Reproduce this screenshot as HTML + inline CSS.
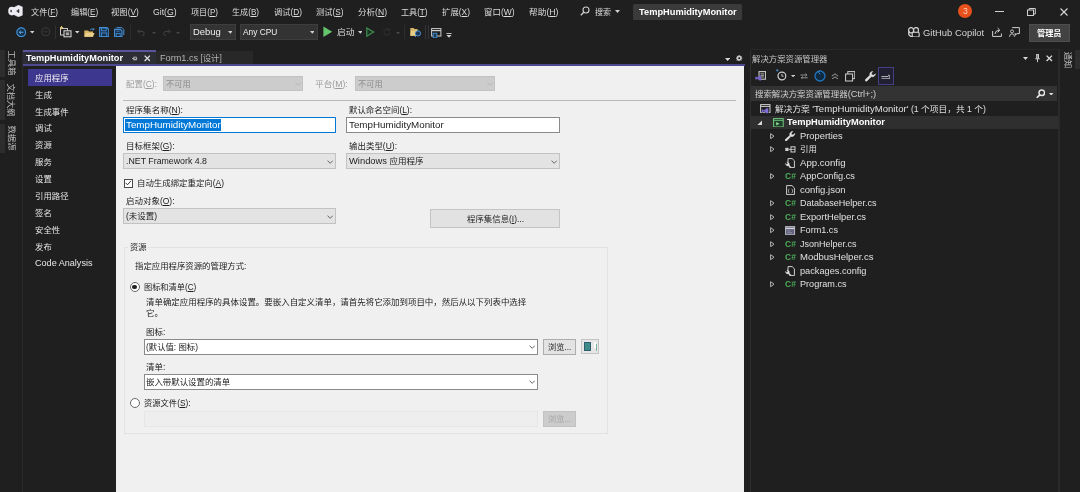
<!DOCTYPE html><html lang="zh-CN"><head><meta charset="utf-8"><title>TempHumidityMonitor - Microsoft Visual Studio</title><style>html,body{margin:0;padding:0}body{width:1080px;height:492px;background:#1f1f1f;position:relative;overflow:hidden;font-family:"Liberation Sans","Noto Sans CJK SC",sans-serif;}.b{position:absolute;box-sizing:border-box}.t{position:absolute;white-space:nowrap;line-height:12px;height:12px;transform-origin:0 50%;}.l{font-size:1.1em}u{text-decoration:underline;text-underline-offset:1px;text-decoration-thickness:0.6px}</style></head><body><div id="root" style="position:absolute;left:0;top:0;width:1080px;height:492px;will-change:transform;">
<svg class="b" style="left:7.6px;top:5px;" width="15" height="12" viewBox="0 0 15 12"><ellipse cx="3.9" cy="6.1" rx="3.7" ry="4.3" fill="#ececf2"/><path d="M5.6 2.8 L10.4 0.3 L14.3 1.9 V10.2 L10.4 11.8 L5.6 9.4 Z" fill="#ececf2" stroke="#ececf2" stroke-width="0.6" stroke-linejoin="round"/><ellipse cx="3.1" cy="6.1" rx="0.8" ry="1.3" fill="#3a3a3a"/><path d="M11 4.3 L8.6 6.1 L11 7.9 Z" fill="#333" stroke="#333" stroke-width="0.5" stroke-linejoin="round"/></svg>
<svg class="b" style="left:580px;top:5.5px;" width="10" height="10" viewBox="0 0 10 10"><circle cx="6" cy="4" r="3" fill="none" stroke="#d0d0d0" stroke-width="1.1"/><path d="M3.8 6.2 L0.8 9.2" stroke="#d0d0d0" stroke-width="1.3"/></svg>
<svg class="b" style="left:614.5px;top:10px;" width="5" height="3" viewBox="0 0 5 3"><path d="M0 0 H5 L2.5 3 Z" fill="#d0d0d0"/></svg>
<div class="b" style="left:633px;top:3.5px;width:109px;height:16.5px;background:#3a3a3a;border-radius:1.5px;"></div>
<div class="b" style="left:958px;top:4px;width:14px;height:14px;background:#e8501c;border-radius:7px;"></div>
<div class="b" style="left:995px;top:11.4px;width:8.5px;height:1.1px;background:#d0d0d0;"></div>
<svg class="b" style="left:1026.5px;top:8px;" width="9" height="8" viewBox="0 0 9 8"><rect x="0.5" y="2" width="6" height="5.5" fill="none" stroke="#d0d0d0" stroke-width="1"/><path d="M2.2 2 V0.5 H8.3 V6 H6.6" fill="none" stroke="#d0d0d0" stroke-width="1"/></svg>
<svg class="b" style="left:1059.5px;top:8.1px;" width="8" height="8" viewBox="0 0 8 8"><path d="M0.5 0.5 L7.5 7.5 M7.5 0.5 L0.5 7.5" stroke="#d8d8d8" stroke-width="1.1"/></svg>
<svg class="b" style="left:15.5px;top:26.5px;" width="10.5" height="10.5" viewBox="0 0 10.5 10.5"><circle cx="5.25" cy="5.25" r="4.4" fill="#15324d" stroke="#3f93dc" stroke-width="1.2"/><path d="M7.4 5.25 H3.4 M4.9 3.6 L3.2 5.25 L4.9 6.9" stroke="#6fb6f0" stroke-width="0.9" fill="none"/></svg>
<svg class="b" style="left:30px;top:31px;" width="4.5" height="2.6" viewBox="0 0 4.5 2.6"><path d="M0 0 H4.5 L2.25 2.6 Z" fill="#d8d8d8"/></svg>
<svg class="b" style="left:40.5px;top:27px;" width="9.5" height="9.5" viewBox="0 0 9.5 9.5"><circle cx="4.75" cy="4.75" r="4" fill="none" stroke="#3a3a3a" stroke-width="1.1"/><path d="M2.6 4.75 H6.6" stroke="#3a3a3a" stroke-width="0.9"/></svg>
<div class="b" style="left:54.5px;top:25px;width:1px;height:14px;background:#303030;"></div>
<svg class="b" style="left:60px;top:26px;" width="12" height="11.5" viewBox="0 0 12 11.5"><rect x="0.5" y="2.5" width="7" height="6.5" fill="none" stroke="#c9c9c9" stroke-width="1"/><rect x="4" y="4.8" width="7" height="6" fill="#252525" stroke="#dedede" stroke-width="1"/><path d="M1.5 0 V3.2 M0 1.6 H3.2" stroke="#e2c26f" stroke-width="1"/><rect x="5.8" y="6.4" width="3.4" height="2.8" fill="#a8a8a8"/></svg>
<svg class="b" style="left:75px;top:31px;" width="4.5" height="2.6" viewBox="0 0 4.5 2.6"><path d="M0 0 H4.5 L2.25 2.6 Z" fill="#d8d8d8"/></svg>
<svg class="b" style="left:83.5px;top:27.5px;" width="11" height="9" viewBox="0 0 11 9"><path d="M0.3 2.6 H4 L5 3.6 H9 V8.7 H0.3 Z" fill="#d9b866"/><path d="M1.8 5 H10.6 L9 8.7 H0.3 Z" fill="#e9cf8a"/><path d="M6.2 1.6 Q8.2 -0.2 9.8 1.6 M9.9 0.2 V1.8 H8.4" stroke="#4e9be0" stroke-width="0.8" fill="none"/></svg>
<svg class="b" style="left:98.8px;top:27px;" width="10.4" height="10.4" viewBox="0 0 10.4 10.4"><path d="M0.6 0.6 H8 L9.8 2.4 V9.8 H0.6 Z" fill="#17304a" stroke="#4590d6" stroke-width="1.1"/><rect x="2.6" y="0.8" width="4.6" height="3" fill="none" stroke="#4590d6" stroke-width="0.9"/><rect x="2.4" y="6" width="5.4" height="3.6" fill="none" stroke="#4590d6" stroke-width="0.9"/></svg>
<svg class="b" style="left:114.2px;top:27px;" width="10.4" height="10.4" viewBox="0 0 10.4 10.4"><path d="M2.4 0.6 H8 L9.8 2.4 V8 " fill="none" stroke="#4590d6" stroke-width="1"/><path d="M0.6 2.4 H6.4 L8 4 V9.8 H0.6 Z" fill="#17304a" stroke="#4590d6" stroke-width="1.1"/><rect x="2.2" y="6.4" width="4" height="3" fill="none" stroke="#4590d6" stroke-width="0.8"/><path d="M2.4 4.2 H5.6" stroke="#4590d6" stroke-width="0.8"/></svg>
<div class="b" style="left:130px;top:25px;width:1px;height:14px;background:#2c2c2c;"></div>
<svg class="b" style="left:136.5px;top:28px;" width="8" height="8" viewBox="0 0 8 8"><path d="M1 3.4 H5 Q7.2 3.4 7.2 5.6 Q7.2 7.6 5 7.6 M2.8 1.4 L0.8 3.4 L2.8 5.4" stroke="#444444" stroke-width="1" fill="none"/></svg>
<svg class="b" style="left:151.7px;top:31.5px;" width="4" height="2.4" viewBox="0 0 4 2.4"><path d="M0 0 H4 L2 2.4 Z" fill="#444444"/></svg>
<svg class="b" style="left:162.5px;top:28px;" width="8" height="8" viewBox="0 0 8 8"><path d="M7 3.4 H3 Q0.8 3.4 0.8 5.6 Q0.8 7.6 3 7.6 M5.2 1.4 L7.2 3.4 L5.2 5.4" stroke="#444444" stroke-width="1" fill="none"/></svg>
<svg class="b" style="left:176px;top:31.5px;" width="4" height="2.4" viewBox="0 0 4 2.4"><path d="M0 0 H4 L2 2.4 Z" fill="#444444"/></svg>
<div class="b" style="left:190px;top:24.2px;width:46px;height:15.5px;background:#333333;border:1px solid #3e3e3e;"></div>
<svg class="b" style="left:227.5px;top:30.8px;" width="4.6" height="2.8" viewBox="0 0 4.6 2.8"><path d="M0 0 H4.6 L2.3 2.8 Z" fill="#d0d0d0"/></svg>
<div class="b" style="left:240px;top:24.2px;width:78px;height:15.5px;background:#333333;border:1px solid #3e3e3e;"></div>
<svg class="b" style="left:309.5px;top:30.8px;" width="4.6" height="2.8" viewBox="0 0 4.6 2.8"><path d="M0 0 H4.6 L2.3 2.8 Z" fill="#d0d0d0"/></svg>
<svg class="b" style="left:323.3px;top:26px;" width="9.5" height="11.4" viewBox="0 0 9.5 11.4"><path d="M0.4 0.4 L9.2 5.7 L0.4 11 Z" fill="#63c46c"/></svg>
<svg class="b" style="left:357.8px;top:30.8px;" width="4.6" height="2.8" viewBox="0 0 4.6 2.8"><path d="M0 0 H4.6 L2.3 2.8 Z" fill="#d0d0d0"/></svg>
<svg class="b" style="left:366.2px;top:26.8px;" width="8.6" height="10.2" viewBox="0 0 8.6 10.2"><path d="M0.8 1 L7.6 5.1 L0.8 9.2 Z" fill="#1c3324" stroke="#3f8f52" stroke-width="1.2"/></svg>
<svg class="b" style="left:382.5px;top:28px;" width="8" height="8" viewBox="0 0 8 8"><path d="M6.6 2 A3.2 3.2 0 1 0 7.2 4.6 M6.8 0.4 V2.4 H4.8" stroke="#343434" stroke-width="1" fill="none"/></svg>
<svg class="b" style="left:396.4px;top:31.5px;" width="4" height="2.4" viewBox="0 0 4 2.4"><path d="M0 0 H4 L2 2.4 Z" fill="#4a4a4a"/></svg>
<div class="b" style="left:404px;top:25px;width:1px;height:14px;background:#2c2c2c;"></div>
<svg class="b" style="left:410px;top:27px;" width="11.5" height="10.5" viewBox="0 0 11.5 10.5"><path d="M0.3 1 H3.6 L4.6 2 H7.6 V8.8 H0.3 Z" fill="#d6b465"/><path d="M1 3.8 H8.6 L7.6 8.8 H0.3 Z" fill="#e8cc85"/><circle cx="8" cy="6.4" r="2.6" fill="#1f3550" stroke="#4590d6" stroke-width="1"/><path d="M6.4 8.4 L5 10" stroke="#4590d6" stroke-width="1"/></svg>
<div class="b" style="left:425.2px;top:25px;width:1px;height:14px;background:#34343c;"></div>
<div class="b" style="left:427.6px;top:25px;width:1px;height:14px;background:#34343c;"></div>
<svg class="b" style="left:431px;top:27.6px;" width="10.5" height="10.5" viewBox="0 0 10.5 10.5"><rect x="0.6" y="0.6" width="9.3" height="7.4" fill="none" stroke="#cfcfcf" stroke-width="1"/><path d="M0.6 2.6 H9.9" stroke="#cfcfcf" stroke-width="1.2"/><rect x="2.2" y="5.2" width="3.6" height="4.6" fill="#1f3550" stroke="#4590d6" stroke-width="0.9"/></svg>
<svg class="b" style="left:446px;top:33px;" width="6" height="5" viewBox="0 0 6 5"><path d="M0.4 0.5 H5.6" stroke="#d0d0d0" stroke-width="0.9"/><path d="M0.4 2 H5.6 L3 4.8 Z" fill="#d0d0d0"/></svg>
<svg class="b" style="left:907.8px;top:26.5px;" width="12" height="10.6" viewBox="0 0 12 10.6"><rect x="0.7" y="0.7" width="4.8" height="5.2" rx="2.1" fill="none" stroke="#d8d8d8" stroke-width="1.2"/><rect x="5.6" y="0.7" width="4.8" height="5.2" rx="2.1" fill="none" stroke="#d8d8d8" stroke-width="1.2"/><path d="M0.8 4 V7.6 Q1.6 9.4 4.4 9.8" fill="none" stroke="#d8d8d8" stroke-width="1.3"/><rect x="4.2" y="5.2" width="7" height="4.8" rx="1.4" fill="#1f1f1f" stroke="#d8d8d8" stroke-width="1.1"/></svg>
<svg class="b" style="left:992px;top:27px;" width="10.5" height="10" viewBox="0 0 10.5 10"><path d="M0.6 4 V9.4 H9.4 V6.5" fill="none" stroke="#cfcfcf" stroke-width="1"/><path d="M3 7 Q3.2 3.4 7 3.2 M5.6 1 L7.8 3.2 L5.6 5.4" fill="none" stroke="#cfcfcf" stroke-width="1"/></svg>
<svg class="b" style="left:1009px;top:27px;" width="11" height="10.5" viewBox="0 0 11 10.5"><path d="M3.2 0.6 H10.4 V6.6 H8 L6.4 8.2 V6.6 H5.6" fill="none" stroke="#cfcfcf" stroke-width="1"/><circle cx="3" cy="4.4" r="1.5" fill="none" stroke="#cfcfcf" stroke-width="0.9"/><path d="M0.5 9.8 Q0.6 6.8 3 6.8 Q5.4 6.8 5.5 9.8" fill="none" stroke="#cfcfcf" stroke-width="0.9"/></svg>
<div class="b" style="left:1028.5px;top:24px;width:41.5px;height:17.6px;background:#424242;border:1px solid #4d4d4d;"></div>
<div class="b" style="left:21.6px;top:50px;width:1px;height:442px;background:#2a2a2a;"></div>
<div class="b" style="left:0px;top:49.5px;width:5px;height:27.0px;background:#2d2d2d;"></div>
<div class="b" style="left:0px;top:79.5px;width:5px;height:40.0px;background:#2d2d2d;"></div>
<div class="b" style="left:0px;top:123.5px;width:5px;height:29.5px;background:#2d2d2d;"></div>
<span class="b" style="left:11.4px;top:63.099999999999994px;width:0;height:0;"><span style="position:absolute;white-space:nowrap;font-size:8.3px;line-height:10px;color:#bdbdbd;left:-12.499999999999996px;top:-5px;width:24.999999999999993px;text-align:center;transform:rotate(90deg);">工具箱</span></span>
<span class="b" style="left:11.4px;top:100.1px;width:0;height:0;"><span style="position:absolute;white-space:nowrap;font-size:8.3px;line-height:10px;color:#bdbdbd;left:-17.300000000000004px;top:-5px;width:34.60000000000001px;text-align:center;transform:rotate(90deg);">文档大纲</span></span>
<span class="b" style="left:11.4px;top:138.4px;width:0;height:0;"><span style="position:absolute;white-space:nowrap;font-size:8.3px;line-height:10px;color:#bdbdbd;left:-12.600000000000001px;top:-5px;width:25.200000000000003px;text-align:center;transform:rotate(90deg);">数据源</span></span>
<div class="b" style="left:23.3px;top:50px;width:132.7px;height:15.5px;background:#2d2d36;"></div>
<div class="b" style="left:23.3px;top:50px;width:132.7px;height:1.6px;background:#5a549a;"></div>
<div class="b" style="left:156px;top:51px;width:96.5px;height:14px;background:#282828;"></div>
<svg class="b" style="left:132px;top:55.8px;" width="5.6" height="5" viewBox="0 0 5.6 5"><path d="M0 2.5 H1.8 M1.8 0.8 V4.2 M1.8 1.2 H4.6 V3.8 H1.8 M4.6 3.2 H1.8" stroke="#c8c8c8" stroke-width="0.8" fill="none"/></svg>
<svg class="b" style="left:143.8px;top:55.2px;" width="6.6" height="6.6" viewBox="0 0 6.6 6.6"><path d="M0.6 0.6 L6 6 M6 0.6 L0.6 6" stroke="#e0e0e0" stroke-width="1.3"/></svg>
<div class="b" style="left:23.3px;top:64px;width:721.5px;height:2px;background:#4d4890;"></div>
<svg class="b" style="left:724.8px;top:58.2px;" width="5.2" height="3" viewBox="0 0 5.2 3"><path d="M0 0 H5.2 L2.6 3 Z" fill="#d8d8d8"/></svg>
<svg class="b" style="left:736.3px;top:54.8px;" width="6.4" height="6.4" viewBox="0 0 6.4 6.4"><circle cx="3.2" cy="3.2" r="1.9" fill="none" stroke="#c8c8c8" stroke-width="1.5"/><path d="M3.2 0 V6.4 M0 3.2 H6.4 M0.9 0.9 L5.5 5.5 M5.5 0.9 L0.9 5.5" stroke="#c8c8c8" stroke-width="0.8"/><circle cx="3.2" cy="3.2" r="0.9" fill="#1f1f1f"/></svg>
<div class="b" style="left:27.8px;top:69px;width:84.6px;height:17.2px;background:#3e3790;"></div>
<div class="b" style="left:115.6px;top:65.8px;width:628.8px;height:426.2px;background:#f0f0f0;"></div>
<div class="b" style="left:163px;top:76px;width:140px;height:15.2px;background:#cccccc;border:1px solid #c2c2c2;"></div>
<svg class="b" style="left:294.5px;top:82px;" width="6.4" height="4" viewBox="0 0 6.4 4"><path d="M0.5 0.6 L3.2 3.3 L5.9 0.6" fill="none" stroke="#b4b4b4" stroke-width="0.9"/></svg>
<div class="b" style="left:355px;top:76px;width:140px;height:15.2px;background:#cccccc;border:1px solid #c2c2c2;"></div>
<svg class="b" style="left:486.5px;top:82px;" width="6.4" height="4" viewBox="0 0 6.4 4"><path d="M0.5 0.6 L3.2 3.3 L5.9 0.6" fill="none" stroke="#b4b4b4" stroke-width="0.9"/></svg>
<div class="b" style="left:123px;top:99.8px;width:613px;height:1px;background:#b9b9b9;"></div>
<div class="b" style="left:123.4px;top:117px;width:213px;height:15.7px;background:#ffffff;border:1px solid #0078d7;"></div>
<div class="b" style="left:125px;top:119px;width:95.8px;height:11.8px;background:#0078d7;"></div>
<div class="b" style="left:346px;top:117px;width:214px;height:15.7px;background:#ffffff;border:1px solid #8a8a8a;"></div>
<div class="b" style="left:123.4px;top:153.4px;width:213px;height:15.6px;background:#e3e3e3;border:1px solid #c2c2c2;"></div>
<svg class="b" style="left:327px;top:159.6px;" width="6.4" height="4" viewBox="0 0 6.4 4"><path d="M0.5 0.6 L3.2 3.3 L5.9 0.6" fill="none" stroke="#555" stroke-width="0.9"/></svg>
<div class="b" style="left:346px;top:153.4px;width:214px;height:15.6px;background:#e3e3e3;border:1px solid #c2c2c2;"></div>
<svg class="b" style="left:550.8px;top:159.6px;" width="6.4" height="4" viewBox="0 0 6.4 4"><path d="M0.5 0.6 L3.2 3.3 L5.9 0.6" fill="none" stroke="#555" stroke-width="0.9"/></svg>
<div class="b" style="left:123.5px;top:178.5px;width:9.4px;height:9.4px;background:#ffffff;border:1px solid #4a4a4a;"></div>
<svg class="b" style="left:125px;top:180.4px;" width="6.6" height="5.6" viewBox="0 0 6.6 5.6"><path d="M0.6 2.8 L2.5 4.8 L6 0.8" fill="none" stroke="#222" stroke-width="0.9"/></svg>
<div class="b" style="left:123.4px;top:208.3px;width:213px;height:15.6px;background:#e3e3e3;border:1px solid #c2c2c2;"></div>
<svg class="b" style="left:327px;top:214.5px;" width="6.4" height="4" viewBox="0 0 6.4 4"><path d="M0.5 0.6 L3.2 3.3 L5.9 0.6" fill="none" stroke="#555" stroke-width="0.9"/></svg>
<div class="b" style="left:429.8px;top:208.8px;width:130px;height:19.6px;background:#e2e2e2;border:1px solid #c4c4c4;"></div>
<div class="b" style="left:123.6px;top:247.2px;width:484px;height:186.6px;border:1px solid #e3e3e3;"></div>
<div class="b" style="left:128px;top:242px;width:20px;height:10px;background:#f0f0f0;"></div>
<div class="b" style="left:129.6px;top:282px;width:10px;height:10px;background:#ffffff;border:1px solid #6a6a6a;border-radius:5px;"></div>
<div class="b" style="left:132.4px;top:284.8px;width:4.4px;height:4.4px;background:#222;border-radius:2.2px;"></div>
<div class="b" style="left:144px;top:339px;width:394.4px;height:15.7px;background:#ffffff;border:1px solid #8a8a8a;"></div>
<svg class="b" style="left:529px;top:345.2px;" width="6.4" height="4" viewBox="0 0 6.4 4"><path d="M0.5 0.6 L3.2 3.3 L5.9 0.6" fill="none" stroke="#555" stroke-width="0.9"/></svg>
<div class="b" style="left:543.4px;top:339px;width:32.8px;height:15.7px;background:#e3e3e3;border:1px solid #adadad;"></div>
<div class="b" style="left:581.2px;top:339.4px;width:17.6px;height:14.4px;background:#e6e6e6;border:1px solid #c4c4c4;"></div>
<div class="b" style="left:584px;top:342px;width:6.6px;height:8.6px;background:#3f8a86;border:1px solid #2d5f70;"></div>
<div class="b" style="left:593.6px;top:341.6px;width:2.4px;height:6px;background:#fafafa;"></div>
<div class="b" style="left:596px;top:343.6px;width:1.2px;height:7.4px;background:#7fb0a0;"></div>
<div class="b" style="left:144px;top:373.8px;width:394.4px;height:15.9px;background:#ffffff;border:1px solid #8a8a8a;"></div>
<svg class="b" style="left:529px;top:380px;" width="6.4" height="4" viewBox="0 0 6.4 4"><path d="M0.5 0.6 L3.2 3.3 L5.9 0.6" fill="none" stroke="#555" stroke-width="0.9"/></svg>
<div class="b" style="left:129.6px;top:397.8px;width:10px;height:10px;background:#ffffff;border:1px solid #6a6a6a;border-radius:5px;"></div>
<div class="b" style="left:144px;top:411.2px;width:394.4px;height:15.4px;background:#eeeeee;border:1px solid #e6e6e6;"></div>
<div class="b" style="left:543.4px;top:411.4px;width:32.8px;height:15.4px;background:#cccccc;border:1px solid #c2c2c2;"></div>
<div class="b" style="left:749.6px;top:50px;width:1px;height:442px;background:#303030;"></div>
<svg class="b" style="left:1023px;top:57.2px;" width="5" height="3" viewBox="0 0 5 3"><path d="M0 0 H5 L2.5 3 Z" fill="#d8d8d8"/></svg>
<svg class="b" style="left:1034.6px;top:54.2px;" width="5" height="8.4" viewBox="0 0 5 8.4"><path d="M1.2 0.4 H3.8 M1.6 0.4 V4.6 M3.5 0.4 V4.6 M2.9 0.4 V4.6 M0.2 4.8 H4.8 M2.5 4.8 V8.2" stroke="#d8d8d8" stroke-width="0.9" fill="none"/></svg>
<svg class="b" style="left:1046.2px;top:55px;" width="6.6" height="6.6" viewBox="0 0 6.6 6.6"><path d="M0.6 0.6 L6 6 M6 0.6 L0.6 6" stroke="#e0e0e0" stroke-width="1.3"/></svg>
<svg class="b" style="left:754.5px;top:70.6px;" width="11.5" height="10" viewBox="0 0 11.5 10"><rect x="4" y="0.6" width="6.6" height="7.6" fill="#2a2a2a" stroke="#d4d4d4" stroke-width="1"/><path d="M5.6 2.8 H9 M5.6 4.4 H9 M5.6 6 H9" stroke="#d4d4d4" stroke-width="0.7"/><path d="M5 4.4 L6.2 5 V9.2 L5 9.8 L2.3 7.7 L1.1 8.7 L0.3 8.3 V5.9 L1.1 5.5 L2.3 6.5 Z" fill="#7365c8"/></svg>
<svg class="b" style="left:776.2px;top:69.2px;" width="11" height="11.6" viewBox="0 0 11 11.6"><circle cx="5.9" cy="7" r="3.9" fill="none" stroke="#cfcfcf" stroke-width="1.2"/><path d="M5.9 4.9 V7.2 H7.6" stroke="#cfcfcf" stroke-width="0.9" fill="none"/><path d="M1.3 0 V2.6 M0 1.3 H2.6" stroke="#4590d6" stroke-width="0.8"/></svg>
<svg class="b" style="left:791px;top:75px;" width="4.2" height="2.4" viewBox="0 0 4.2 2.4"><path d="M0 0 H4.2 L2.1 2.4 Z" fill="#c8c8c8"/></svg>
<svg class="b" style="left:799.8px;top:72.6px;" width="8.2" height="6.8" viewBox="0 0 8.2 6.8"><path d="M0.4 2 H6.8 M5.4 0.6 L7 2 L5.4 3.4 M7.8 4.8 H1.4 M2.8 3.4 L1.2 4.8 L2.8 6.2" stroke="#9a9a9a" stroke-width="0.9" fill="none"/></svg>
<svg class="b" style="left:813.8px;top:69.8px;" width="12" height="12" viewBox="0 0 12 12"><circle cx="6" cy="6" r="5" fill="#102a40" stroke="#1f74bd" stroke-width="1.3"/><path d="M6 1 V4 M4.2 2.6 L6 4.2" stroke="#102a40" stroke-width="1.6"/><path d="M6.6 0.6 L4.4 2.4 L6.4 4.2" fill="none" stroke="#2f8ad6" stroke-width="1"/></svg>
<svg class="b" style="left:830.8px;top:72.6px;" width="8" height="6.8" viewBox="0 0 8 6.8"><path d="M0.8 3.2 L4 0.8 L7.2 3.2 M0.8 6.2 L4 3.8 L7.2 6.2" fill="none" stroke="#a0a0a0" stroke-width="1"/></svg>
<svg class="b" style="left:845px;top:71px;" width="10.4" height="10.6" viewBox="0 0 10.4 10.6"><rect x="2.8" y="0.6" width="7" height="7" fill="none" stroke="#d0d0d0" stroke-width="1"/><rect x="0.6" y="3" width="7" height="7" fill="#1f1f1f" stroke="#d0d0d0" stroke-width="1"/></svg>
<svg class="b" style="left:865px;top:71.4px;" width="11" height="10.4" viewBox="0 0 11 10.4"><path d="M10.4 2.8 A3 3 0 0 1 6.3 5.6 L2 9.9 A1.1 1.1 0 0 1 0.4 8.4 L4.9 4.2 A3 3 0 0 1 7.8 0.4 L6.4 2.2 L6.9 3.8 L8.6 4.2 Z" fill="#dedede" stroke="#dedede" stroke-width="0.5"/></svg>
<div class="b" style="left:877.8px;top:67.3px;width:16.6px;height:17.8px;background:#202030;border:1px solid #443e86;"></div>
<svg class="b" style="left:881px;top:73.6px;" width="9.4" height="5.6" viewBox="0 0 9.4 5.6"><path d="M0.4 2.6 H7.4 M0.4 4.8 H8.8 V2.6 Q8.8 0.8 7 1.2" fill="none" stroke="#d0d0d0" stroke-width="0.9"/></svg>
<div class="b" style="left:751px;top:86px;width:306px;height:14.5px;background:#333333;"></div>
<svg class="b" style="left:1036px;top:88.6px;" width="9.4" height="9.6" viewBox="0 0 9.4 9.6"><circle cx="5.8" cy="3.8" r="2.8" fill="none" stroke="#e6e6e6" stroke-width="1.5"/><path d="M3.8 5.8 L0.8 8.8" stroke="#e6e6e6" stroke-width="1.7"/></svg>
<svg class="b" style="left:1049.4px;top:92.6px;" width="4.4" height="2.6" viewBox="0 0 4.4 2.6"><path d="M0 0 H4.4 L2.2 2.6 Z" fill="#e0e0e0"/></svg>
<div class="b" style="left:751px;top:115.60000000000001px;width:306.5px;height:13.5px;background:#2f2f2f;"></div>
<svg class="b" style="left:760px;top:103.9px;" width="10.6" height="10" viewBox="0 0 10.6 10"><rect x="0.6" y="0.6" width="9.4" height="7.8" fill="none" stroke="#cfcfcf" stroke-width="1"/><path d="M0.6 2.4 H10" stroke="#cfcfcf" stroke-width="1"/><path d="M7 3.8 L8.6 4.6 V9 L7 9.8 L3.8 7.5 L2.4 8.6 L1.4 8.1 V5.6 L2.4 5.1 L3.8 6.2 Z" fill="#7d6fd6" stroke="#1f1f1f" stroke-width="0.5"/></svg>
<svg class="b" style="left:756.8px;top:120.0px;" width="5.4" height="5.4" viewBox="0 0 5.4 5.4"><path d="M5.2 0.2 V5.2 H0.2 Z" fill="#d8d8d8"/></svg>
<svg class="b" style="left:773px;top:117.60000000000001px;" width="10.8" height="9.6" viewBox="0 0 10.8 9.6"><rect x="0.6" y="0.6" width="9.6" height="8.4" fill="#1e3a26" stroke="#6dbf7a" stroke-width="1.1"/><path d="M0.6 2.4 H10.2" stroke="#6dbf7a" stroke-width="0.9"/><path d="M3.2 4 L6.6 5.7 L3.2 7.6 Z" fill="#8fd79a"/></svg>
<svg class="b" style="left:769.6px;top:132.70000000000002px;" width="4.8" height="6.4" viewBox="0 0 4.8 6.4"><path d="M0.6 0.7 L4.1 3.2 L0.6 5.7 Z" fill="none" stroke="#c4c4c4" stroke-width="0.9"/></svg>
<svg class="b" style="left:785px;top:130.9px;" width="10.6" height="10.2" viewBox="0 0 10.6 10.2"><path d="M9.8 2.6 A2.9 2.9 0 0 1 5.9 5.3 L1.7 9.7 A0.9 0.9 0 0 1 0.4 8.4 L5 4.4 A2.9 2.9 0 0 1 7.7 0.5 L6.2 2.2 L6.6 3.7 L8.1 4.1 Z" fill="#e0e0e0" stroke="#e0e0e0" stroke-width="0.7" stroke-linejoin="round"/></svg>
<svg class="b" style="left:769.6px;top:146.20000000000002px;" width="4.8" height="6.4" viewBox="0 0 4.8 6.4"><path d="M0.6 0.7 L4.1 3.2 L0.6 5.7 Z" fill="none" stroke="#c4c4c4" stroke-width="0.9"/></svg>
<svg class="b" style="left:785px;top:146.0px;" width="10.6" height="7" viewBox="0 0 10.6 7"><rect x="0.3" y="1.8" width="3.2" height="3.2" fill="#cfcfcf"/><path d="M3.5 3.4 H6" stroke="#cfcfcf" stroke-width="0.9"/><rect x="6" y="0.8" width="4" height="5.2" fill="none" stroke="#cfcfcf" stroke-width="1"/><path d="M6 3.4 H10" stroke="#cfcfcf" stroke-width="0.8"/></svg>
<svg class="b" style="left:785.4px;top:157.9px;" width="10" height="10.2" viewBox="0 0 10 10.2"><path d="M3 0.6 H7.2 L9.4 2.8 V9.6 H4.6" fill="none" stroke="#d0d0d0" stroke-width="1"/><path d="M3 0.6 V4" stroke="#d0d0d0" stroke-width="1"/><path d="M0.5 5.4 A2.3 2.3 0 0 0 3.4 7.8 L5 9.6 L5.8 8.8 L4.2 7 A2.3 2.3 0 0 0 1.8 4 L2.8 5.2 L2.4 6.2 L1.4 6.4 Z" fill="#e8e8e8" stroke="#e8e8e8" stroke-width="0.4"/></svg>
<svg class="b" style="left:769.6px;top:173.20000000000002px;" width="4.8" height="6.4" viewBox="0 0 4.8 6.4"><path d="M0.6 0.7 L4.1 3.2 L0.6 5.7 Z" fill="none" stroke="#c4c4c4" stroke-width="0.9"/></svg>
<svg class="b" style="left:786px;top:184.9px;" width="9" height="10.2" viewBox="0 0 9 10.2"><path d="M0.6 0.6 H6 L8.4 3 V9.6 H0.6 Z" fill="none" stroke="#d0d0d0" stroke-width="1"/><path d="M3.4 4 Q2.6 4 2.6 5 Q2.6 6 2 6 Q2.6 6 2.6 7 Q2.6 8 3.4 8 M5.6 4 Q6.4 4 6.4 5 Q6.4 6 7 6 Q6.4 6 6.4 7 Q6.4 8 5.6 8" fill="none" stroke="#d0d0d0" stroke-width="0.7"/></svg>
<svg class="b" style="left:769.6px;top:200.20000000000002px;" width="4.8" height="6.4" viewBox="0 0 4.8 6.4"><path d="M0.6 0.7 L4.1 3.2 L0.6 5.7 Z" fill="none" stroke="#c4c4c4" stroke-width="0.9"/></svg>
<svg class="b" style="left:769.6px;top:213.70000000000002px;" width="4.8" height="6.4" viewBox="0 0 4.8 6.4"><path d="M0.6 0.7 L4.1 3.2 L0.6 5.7 Z" fill="none" stroke="#c4c4c4" stroke-width="0.9"/></svg>
<svg class="b" style="left:769.6px;top:227.20000000000002px;" width="4.8" height="6.4" viewBox="0 0 4.8 6.4"><path d="M0.6 0.7 L4.1 3.2 L0.6 5.7 Z" fill="none" stroke="#c4c4c4" stroke-width="0.9"/></svg>
<svg class="b" style="left:785.4px;top:225.8px;" width="10.2" height="9.4" viewBox="0 0 10.2 9.4"><rect x="0.6" y="0.6" width="9" height="8.2" fill="#62627c" stroke="#b8b8c4" stroke-width="1"/><path d="M0.6 2.4 H9.6" stroke="#d0d0d8" stroke-width="1.4"/><path d="M2.4 5 H5 M2.4 6.8 H7" stroke="#9a9ab0" stroke-width="0.8"/></svg>
<svg class="b" style="left:769.6px;top:240.70000000000002px;" width="4.8" height="6.4" viewBox="0 0 4.8 6.4"><path d="M0.6 0.7 L4.1 3.2 L0.6 5.7 Z" fill="none" stroke="#c4c4c4" stroke-width="0.9"/></svg>
<svg class="b" style="left:769.6px;top:254.2px;" width="4.8" height="6.4" viewBox="0 0 4.8 6.4"><path d="M0.6 0.7 L4.1 3.2 L0.6 5.7 Z" fill="none" stroke="#c4c4c4" stroke-width="0.9"/></svg>
<svg class="b" style="left:785.4px;top:265.9px;" width="10" height="10.2" viewBox="0 0 10 10.2"><path d="M3 0.6 H7.2 L9.4 2.8 V9.6 H4.6" fill="none" stroke="#d0d0d0" stroke-width="1"/><path d="M3 0.6 V4" stroke="#d0d0d0" stroke-width="1"/><path d="M0.5 5.4 A2.3 2.3 0 0 0 3.4 7.8 L5 9.6 L5.8 8.8 L4.2 7 A2.3 2.3 0 0 0 1.8 4 L2.8 5.2 L2.4 6.2 L1.4 6.4 Z" fill="#e8e8e8" stroke="#e8e8e8" stroke-width="0.4"/></svg>
<svg class="b" style="left:769.6px;top:281.2px;" width="4.8" height="6.4" viewBox="0 0 4.8 6.4"><path d="M0.6 0.7 L4.1 3.2 L0.6 5.7 Z" fill="none" stroke="#c4c4c4" stroke-width="0.9"/></svg>
<div class="b" style="left:1058px;top:49px;width:2px;height:443px;background:#2a2a2a;"></div>
<div class="b" style="left:750px;top:48.6px;width:308px;height:1px;background:#282828;"></div>
<div class="b" style="left:1075px;top:50px;width:5px;height:19px;background:#2d2d2d;"></div>
<span class="b" style="left:1067.4px;top:59.5px;width:0;height:0;"><span style="position:absolute;white-space:nowrap;font-size:8.3px;line-height:10px;color:#bdbdbd;left:-8.5px;top:-5px;width:17px;text-align:center;transform:rotate(90deg);">通知</span></span>
<span class="t" style="left:30.5px;top:5.8px;font-size:8.44px;color:#dcdcdc;transform:scaleX(0.9774);">文件(<u>F</u>)</span>
<span class="t" style="left:70.5px;top:5.8px;font-size:8.44px;color:#dcdcdc;transform:scaleX(0.9717);">编辑(<u>E</u>)</span>
<span class="t" style="left:111px;top:5.8px;font-size:8.44px;color:#dcdcdc;transform:scaleX(0.9895);">视图(<u>V</u>)</span>
<span class="t" style="left:152.8px;top:5.8px;font-size:8.44px;color:#dcdcdc;transform:scaleX(1.0325);">Git(<u>G</u>)</span>
<span class="t" style="left:190.5px;top:5.8px;font-size:8.44px;color:#dcdcdc;transform:scaleX(0.9611);">项目(<u>P</u>)</span>
<span class="t" style="left:232px;top:5.8px;font-size:8.44px;color:#dcdcdc;transform:scaleX(0.9611);">生成(<u>B</u>)</span>
<span class="t" style="left:273.5px;top:5.8px;font-size:8.44px;color:#dcdcdc;transform:scaleX(0.9803);">调试(<u>D</u>)</span>
<span class="t" style="left:315.5px;top:5.8px;font-size:8.44px;color:#dcdcdc;transform:scaleX(0.9789);">测试(<u>S</u>)</span>
<span class="t" style="left:358px;top:5.8px;font-size:8.44px;color:#dcdcdc;transform:scaleX(1.0153);">分析(<u>N</u>)</span>
<span class="t" style="left:401px;top:5.8px;font-size:8.44px;color:#dcdcdc;transform:scaleX(0.9593);">工具(<u>T</u>)</span>
<span class="t" style="left:442px;top:5.8px;font-size:8.44px;color:#dcdcdc;transform:scaleX(0.9967);">扩展(<u>X</u>)</span>
<span class="t" style="left:484px;top:5.8px;font-size:8.44px;color:#dcdcdc;transform:scaleX(1.0026);">窗口(<u>W</u>)</span>
<span class="t" style="left:528.5px;top:5.8px;font-size:8.44px;color:#dcdcdc;transform:scaleX(1.0328);">帮助(<u>H</u>)</span>
<span class="t" style="left:595px;top:5.8px;font-size:8.44px;color:#dcdcdc;transform:scaleX(0.9490);">搜索</span>
<span class="t" style="left:638.6px;top:5.9px;font-size:9.2px;color:#ffffff;font-weight:bold;transform:scaleX(1.0092);">TempHumidityMonitor</span>
<span class="t" style="left:962.6px;top:5.1px;font-size:8.6px;color:#ffd2be;transform:scaleX(1.0039);">3</span>
<span class="t" style="left:193.2px;top:25.8px;font-size:9px;color:#f0f0f0;transform:scaleX(1.0478);">Debug</span>
<span class="t" style="left:243.2px;top:25.8px;font-size:9px;color:#f0f0f0;transform:scaleX(0.9266);">Any CPU</span>
<span class="t" style="left:337px;top:25.9px;font-size:8.44px;color:#dcdcdc;transform:scaleX(1.0380);">启动</span>
<span class="t" style="left:923.2px;top:26.6px;font-size:9.1px;color:#d6d6d6;transform:scaleX(1.0348);">GitHub Copilot</span>
<span class="t" style="left:1037px;top:26.8px;font-size:8.3px;color:#ffffff;font-weight:bold;transform:scaleX(0.9837);">管理员</span>
<span class="t" style="left:26.3px;top:52.4px;font-size:9.2px;color:#ffffff;font-weight:bold;transform:scaleX(1.0019);">TempHumidityMonitor</span>
<span class="t" style="left:159.6px;top:52.4px;font-size:8.44px;color:#b4b4b4;transform:scaleX(0.9872);"><span class="l">Form1.cs</span> [设计]</span>
<span class="t" style="left:34.8px;top:71.8px;font-size:8.44px;color:#f2f2f2;transform:scaleX(0.9969);">应用程序</span>
<span class="t" style="left:34.8px;top:88.67px;font-size:8.44px;color:#e4e4e4;transform:scaleX(0.9965);">生成</span>
<span class="t" style="left:34.8px;top:105.55px;font-size:8.44px;color:#e4e4e4;transform:scaleX(0.9969);">生成事件</span>
<span class="t" style="left:34.8px;top:122.43px;font-size:8.44px;color:#e4e4e4;transform:scaleX(0.9965);">调试</span>
<span class="t" style="left:34.8px;top:139.3px;font-size:8.44px;color:#e4e4e4;transform:scaleX(0.9965);">资源</span>
<span class="t" style="left:34.8px;top:156.18px;font-size:8.44px;color:#e4e4e4;transform:scaleX(0.9965);">服务</span>
<span class="t" style="left:34.8px;top:173.05px;font-size:8.44px;color:#e4e4e4;transform:scaleX(0.9965);">设置</span>
<span class="t" style="left:34.8px;top:189.93px;font-size:8.44px;color:#e4e4e4;transform:scaleX(0.9969);">引用路径</span>
<span class="t" style="left:34.8px;top:206.8px;font-size:8.44px;color:#e4e4e4;transform:scaleX(0.9965);">签名</span>
<span class="t" style="left:34.8px;top:223.68px;font-size:8.44px;color:#e4e4e4;transform:scaleX(0.9968);">安全性</span>
<span class="t" style="left:34.8px;top:240.55px;font-size:8.44px;color:#e4e4e4;transform:scaleX(0.9965);">发布</span>
<span class="t" style="left:34.8px;top:257.32px;font-size:9px;color:#e8e8e8;transform:scaleX(1.0079);">Code Analysis</span>
<span class="t" style="left:126px;top:77.6px;font-size:8.44px;color:#9c9c9c;transform:scaleX(1.0030);">配置(<u>C</u>):</span>
<span class="t" style="left:166.3px;top:77.6px;font-size:8.44px;color:#8c8c8c;transform:scaleX(0.9770);">不可用</span>
<span class="t" style="left:314.8px;top:77.6px;font-size:8.44px;color:#9c9c9c;transform:scaleX(1.0274);">平台(<u>M</u>):</span>
<span class="t" style="left:358.3px;top:77.6px;font-size:8.44px;color:#8c8c8c;transform:scaleX(0.9770);">不可用</span>
<span class="t" style="left:126px;top:104px;font-size:8.44px;color:#222222;transform:scaleX(1.0147);">程序集名称(<u>N</u>):</span>
<span class="t" style="left:125.6px;top:119px;font-size:9.7px;color:#ffffff;transform:scaleX(1.0110);">TempHumidityMonitor</span>
<span class="t" style="left:349px;top:104px;font-size:8.44px;color:#222222;transform:scaleX(0.9970);">默认命名空间(<u>L</u>):</span>
<span class="t" style="left:348.6px;top:119px;font-size:9.7px;color:#222222;transform:scaleX(1.0110);">TempHumidityMonitor</span>
<span class="t" style="left:126px;top:140.2px;font-size:8.44px;color:#222222;transform:scaleX(1.0058);">目标框架(<u>G</u>):</span>
<span class="t" style="left:126px;top:155.3px;font-size:9.5px;color:#222222;transform:scaleX(0.9260);">.NET Framework 4.8</span>
<span class="t" style="left:349px;top:140.2px;font-size:8.44px;color:#222222;transform:scaleX(1.0052);">输出类型(<u>U</u>):</span>
<span class="t" style="left:349px;top:155.3px;font-size:8.44px;color:#222222;transform:scaleX(1.0119);"><span class="l">Windows</span> 应用程序</span>
<span class="t" style="left:137.3px;top:177.2px;font-size:8.44px;color:#222222;transform:scaleX(0.9995);">自动生成绑定重定向(<u>A</u>)</span>
<span class="t" style="left:126px;top:195.2px;font-size:8.44px;color:#222222;transform:scaleX(1.0058);">启动对象(<u>O</u>):</span>
<span class="t" style="left:126px;top:210.3px;font-size:8.44px;color:#222222;transform:scaleX(1.0040);">(未设置)</span>
<span class="t" style="left:466.5px;top:212.8px;font-size:8.44px;color:#222222;transform:scaleX(0.9984);">程序集信息(<u>I</u>)...</span>
<span class="t" style="left:129.7px;top:241.3px;font-size:8.44px;color:#222222;transform:scaleX(0.9787);">资源</span>
<span class="t" style="left:134.6px;top:259.7px;font-size:8.44px;color:#222222;transform:scaleX(0.9962);">指定应用程序资源的管理方式:</span>
<span class="t" style="left:144px;top:281.1px;font-size:8.44px;color:#222222;transform:scaleX(0.9716);">图标和清单(<u>C</u>)</span>
<span class="t" style="left:146.2px;top:295.8px;font-size:8.44px;color:#222222;transform:scaleX(1.0034);">清单确定应用程序的具体设置。要嵌入自定义清单，请首先将它添加到项目中，然后从以下列表中选择</span>
<span class="t" style="left:146.2px;top:307.4px;font-size:8.44px;color:#222222;transform:scaleX(0.9965);">它。</span>
<span class="t" style="left:146.2px;top:325.7px;font-size:8.44px;color:#222222;transform:scaleX(1.0059);">图标:</span>
<span class="t" style="left:146.3px;top:341px;font-size:8.44px;color:#222222;transform:scaleX(0.9922);">(默认值: 图标)</span>
<span class="t" style="left:548.3px;top:341px;font-size:8.44px;color:#222222;transform:scaleX(0.9717);">浏览...</span>
<span class="t" style="left:146.2px;top:361.1px;font-size:8.44px;color:#222222;transform:scaleX(1.0059);">清单:</span>
<span class="t" style="left:146.3px;top:375.8px;font-size:8.44px;color:#222222;transform:scaleX(0.9996);">嵌入带默认设置的清单</span>
<span class="t" style="left:144px;top:396.9px;font-size:8.44px;color:#222222;transform:scaleX(0.9835);">资源文件(<u>S</u>):</span>
<span class="t" style="left:548.3px;top:413.2px;font-size:8.44px;color:#a6a6a6;transform:scaleX(0.9717);">浏览...</span>
<span class="t" style="left:752px;top:52.6px;font-size:8.44px;color:#c4c4c4;transform:scaleX(0.9959);">解决方案资源管理器</span>
<span class="t" style="left:754.8px;top:87.6px;font-size:8.44px;color:#cfcfcf;transform:scaleX(0.9997);">搜索解决方案资源管理器<span class="l">(Ctrl+;)</span></span>
<span class="t" style="left:774.6px;top:102.9px;font-size:8.44px;color:#e0e0e0;transform:scaleX(1.0336);">解决方案 <span class="l">'TempHumidityMonitor'</span> (1 个项目，共 1 个)</span>
<span class="t" style="left:787px;top:116.4px;font-size:9.2px;color:#ffffff;font-weight:bold;transform:scaleX(1.0123);">TempHumidityMonitor</span>
<span class="t" style="left:800px;top:129.9px;font-size:9.3px;color:#e0e0e0;transform:scaleX(1.0053);">Properties</span>
<span class="t" style="left:800px;top:143.4px;font-size:8.44px;color:#e0e0e0;transform:scaleX(1.0083);">引用</span>
<span class="t" style="left:800px;top:156.9px;font-size:9.3px;color:#e0e0e0;transform:scaleX(1.0356);">App.config</span>
<span class="t" style="left:785.3px;top:170.4px;font-size:8.4px;color:#4dab5b;font-weight:bold;transform:scaleX(1.0169);">C#</span>
<span class="t" style="left:800px;top:170.4px;font-size:9.3px;color:#e0e0e0;transform:scaleX(0.9946);">AppConfig.cs</span>
<span class="t" style="left:800px;top:183.9px;font-size:9.3px;color:#e0e0e0;transform:scaleX(1.0236);">config.json</span>
<span class="t" style="left:785.3px;top:197.4px;font-size:8.4px;color:#4dab5b;font-weight:bold;transform:scaleX(1.0169);">C#</span>
<span class="t" style="left:800px;top:197.4px;font-size:9.3px;color:#e0e0e0;transform:scaleX(0.9737);">DatabaseHelper.cs</span>
<span class="t" style="left:785.3px;top:210.9px;font-size:8.4px;color:#4dab5b;font-weight:bold;transform:scaleX(1.0169);">C#</span>
<span class="t" style="left:800px;top:210.9px;font-size:9.3px;color:#e0e0e0;transform:scaleX(1.0057);">ExportHelper.cs</span>
<span class="t" style="left:800px;top:224.4px;font-size:9.3px;color:#e0e0e0;transform:scaleX(0.9806);">Form1.cs</span>
<span class="t" style="left:785.3px;top:237.9px;font-size:8.4px;color:#4dab5b;font-weight:bold;transform:scaleX(1.0169);">C#</span>
<span class="t" style="left:800px;top:237.9px;font-size:9.3px;color:#e0e0e0;transform:scaleX(0.9674);">JsonHelper.cs</span>
<span class="t" style="left:785.3px;top:251.4px;font-size:8.4px;color:#4dab5b;font-weight:bold;transform:scaleX(1.0169);">C#</span>
<span class="t" style="left:800px;top:251.4px;font-size:9.3px;color:#e0e0e0;transform:scaleX(1.0231);">ModbusHelper.cs</span>
<span class="t" style="left:800px;top:264.9px;font-size:9.3px;color:#e0e0e0;transform:scaleX(0.9895);">packages.config</span>
<span class="t" style="left:785.3px;top:278.4px;font-size:8.4px;color:#4dab5b;font-weight:bold;transform:scaleX(1.0169);">C#</span>
<span class="t" style="left:800px;top:278.4px;font-size:9.3px;color:#e0e0e0;transform:scaleX(0.9783);">Program.cs</span>
</div></body></html>
